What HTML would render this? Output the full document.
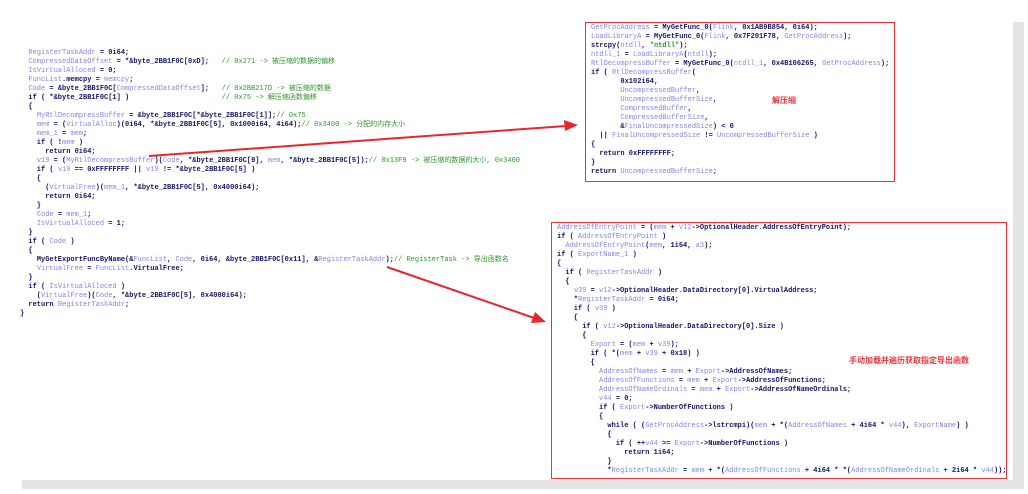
<!DOCTYPE html>
<html><head><meta charset="utf-8">
<style>
html,body{margin:0;padding:0;background:#fff;width:1028px;height:494px;overflow:hidden;position:relative}
pre{margin:0;position:absolute;font-family:"Liberation Mono","Noto Sans CJK SC",monospace;font-size:7px;line-height:9px;color:#14146a;white-space:pre;font-weight:bold}
.v{color:#8585e0;font-weight:normal}
.c{color:#2e962e;font-weight:normal}
.s{color:#2e962e}
.box{position:absolute;border:1.5px solid #e8323a;box-sizing:border-box}
.red{position:absolute;color:#e8323a;font-family:"Liberation Sans","Noto Sans CJK SC",sans-serif;font-size:8px;font-weight:bold}
.sh1{position:absolute;left:1013px;top:22px;width:11px;height:467px;background:#e4e4e4}
.sh2{position:absolute;left:22px;top:480px;width:1002px;height:9px;background:#e4e4e4}
</style></head><body>
<div class="sh1"></div><div class="sh2"></div>
<pre style="left:20px;top:49px">  <span class="v">RegisterTaskAddr</span> = 0i64;
  <span class="v">CompressedDataOffset</span> = *&amp;byte_2BB1F0C[0xD];   <span class="c">// 0x271 -&gt; 被压缩的数据的偏移</span>
  <span class="v">IsVirtualAlloced</span> = 0;
  <span class="v">FuncList</span>.memcpy = <span class="v">memcpy</span>;
  <span class="v">Code</span> = &amp;byte_2BB1F0C[<span class="v">CompressedDataOffset</span>];   <span class="c">// 0x2BB217D -&gt; 被压缩的数据</span>
  if ( *&amp;byte_2BB1F0C[1] )                      <span class="c">// 0x75 -&gt; 解压缩函数偏移</span>
  {
    <span class="v">MyRtlDecompressBuffer</span> = &amp;byte_2BB1F0C[*&amp;byte_2BB1F0C[1]];<span class="c">// 0x75</span>
    <span class="v">mem</span> = (<span class="v">VirtualAlloc</span>)(0i64, *&amp;byte_2BB1F0C[5], 0x1000i64, 4i64);<span class="c">// 0x3400 -&gt; 分配的内存大小</span>
    <span class="v">mem_1</span> = <span class="v">mem</span>;
    if ( !<span class="v">mem</span> )
      return 0i64;
    <span class="v">v19</span> = (<span class="v">MyRtlDecompressBuffer</span>)(<span class="v">Code</span>, *&amp;byte_2BB1F0C[9], <span class="v">mem</span>, *&amp;byte_2BB1F0C[5]);<span class="c">// 0x13F9 -&gt; 被压缩的数据的大小, 0x3400</span>
    if ( <span class="v">v19</span> == 0xFFFFFFFF || <span class="v">v19</span> != *&amp;byte_2BB1F0C[5] )
    {
      (<span class="v">VirtualFree</span>)(<span class="v">mem_1</span>, *&amp;byte_2BB1F0C[5], 0x4000i64);
      return 0i64;
    }
    <span class="v">Code</span> = <span class="v">mem_1</span>;
    <span class="v">IsVirtualAlloced</span> = 1;
  }
  if ( <span class="v">Code</span> )
  {
    MyGetExportFuncByName(&amp;<span class="v">FuncList</span>, <span class="v">Code</span>, 0i64, &amp;byte_2BB1F0C[0x11], &amp;<span class="v">RegisterTaskAddr</span>);<span class="c">// RegisterTask -&gt; 导出函数名</span>
    <span class="v">VirtualFree</span> = <span class="v">FuncList</span>.VirtualFree;
  }
  if ( <span class="v">IsVirtualAlloced</span> )
    (<span class="v">VirtualFree</span>)(<span class="v">Code</span>, *&amp;byte_2BB1F0C[5], 0x4000i64);
  return <span class="v">RegisterTaskAddr</span>;
}</pre>

<div class="box" style="left:585px;top:22px;width:310px;height:160px"></div>
<pre style="left:591px;top:24px"><span class="v">GetProcAddress</span> = MyGetFunc_0(<span class="v">Flink</span>, 0x1AB9B854, 0i64);
<span class="v">LoadLibraryA</span> = MyGetFunc_0(<span class="v">Flink</span>, 0x7F201F78, <span class="v">GetProcAddress</span>);
strcpy(<span class="v">ntdll</span>, <span class="s">"ntdll"</span>);
<span class="v">ntdll_1</span> = <span class="v">LoadLibraryA</span>(<span class="v">ntdll</span>);
<span class="v">RtlDecompressBuffer</span> = MyGetFunc_0(<span class="v">ntdll_1</span>, 0x4B106265, <span class="v">GetProcAddress</span>);
if ( <span class="v">RtlDecompressBuffer</span>(
       0x102i64,
       <span class="v">UncompressedBuffer</span>,
       <span class="v">UncompressedBufferSize</span>,
       <span class="v">CompressedBuffer</span>,
       <span class="v">CompressedBufferSize</span>,
       &amp;<span class="v">FinalUncompressedSize</span>) &lt; 0
  || <span class="v">FinalUncompressedSize</span> != <span class="v">UncompressedBufferSize</span> )
{
  return 0xFFFFFFFF;
}
return <span class="v">UncompressedBufferSize</span>;</pre>
<div class="red" style="left:772px;top:95px">解压缩</div>

<div class="box" style="left:551px;top:222px;width:456px;height:257px"></div>
<pre style="left:557px;top:224px"><span class="v">AddressOfEntryPoint</span> = (<span class="v">mem</span> + <span class="v">v12</span>-&gt;OptionalHeader.AddressOfEntryPoint);
if ( <span class="v">AddressOfEntryPoint</span> )
  <span class="v">AddressOfEntryPoint</span>(<span class="v">mem</span>, 1i64, <span class="v">a3</span>);
if ( <span class="v">ExportName_1</span> )
{
  if ( <span class="v">RegisterTaskAddr</span> )
  {
    <span class="v">v39</span> = <span class="v">v12</span>-&gt;OptionalHeader.DataDirectory[0].VirtualAddress;
    *<span class="v">RegisterTaskAddr</span> = 0i64;
    if ( <span class="v">v39</span> )
    {
      if ( <span class="v">v12</span>-&gt;OptionalHeader.DataDirectory[0].Size )
      {
        <span class="v">Export</span> = (<span class="v">mem</span> + <span class="v">v39</span>);
        if ( *(<span class="v">mem</span> + <span class="v">v39</span> + 0x18) )
        {
          <span class="v">AddressOfNames</span> = <span class="v">mem</span> + <span class="v">Export</span>-&gt;AddressOfNames;
          <span class="v">AddressOfFunctions</span> = <span class="v">mem</span> + <span class="v">Export</span>-&gt;AddressOfFunctions;
          <span class="v">AddressOfNameOrdinals</span> = <span class="v">mem</span> + <span class="v">Export</span>-&gt;AddressOfNameOrdinals;
          <span class="v">v44</span> = 0;
          if ( <span class="v">Export</span>-&gt;NumberOfFunctions )
          {
            while ( (<span class="v">GetProcAddress</span>-&gt;lstrcmpi)(<span class="v">mem</span> + *(<span class="v">AddressOfNames</span> + 4i64 * <span class="v">v44</span>), <span class="v">ExportName</span>) )
            {
              if ( ++<span class="v">v44</span> &gt;= <span class="v">Export</span>-&gt;NumberOfFunctions )
                return 1i64;
            }
            *<span class="v">RegisterTaskAddr</span> = <span class="v">mem</span> + *(<span class="v">AddressOfFunctions</span> + 4i64 * *(<span class="v">AddressOfNameOrdinals</span> + 2i64 * <span class="v">v44</span>));</pre>
<div class="red" style="left:849px;top:355px">手动加载并遍历获取指定导出函数</div>

<svg style="position:absolute;left:0;top:0" width="1028" height="494">
<line x1="149" y1="156" x2="566" y2="126" stroke="#e8262e" stroke-width="2"/>
<polygon points="578,125 564,120 565,131" fill="#e8262e"/>
<line x1="387" y1="267" x2="534" y2="318" stroke="#e8262e" stroke-width="2"/>
<polygon points="546,322 535,312 531,323" fill="#e8262e"/>
</svg>
</body></html>
